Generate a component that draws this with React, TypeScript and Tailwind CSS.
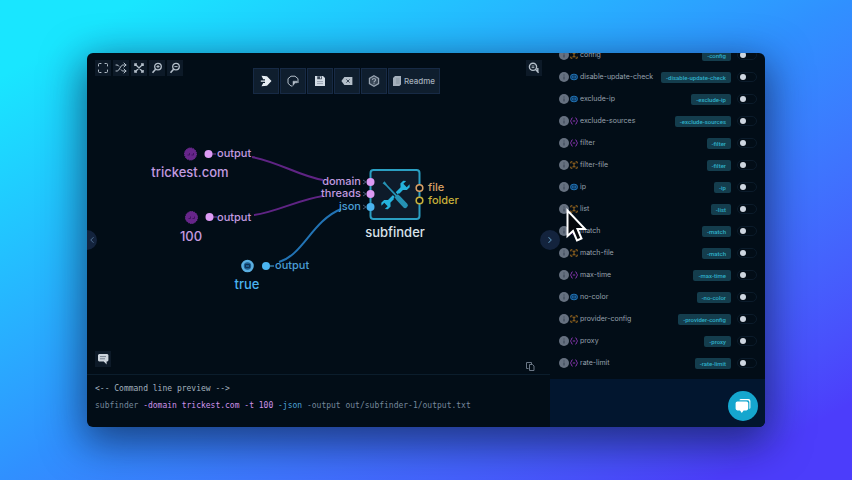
import React from "react";
import { Maximize, Shuffle, ChevronLeft, ChevronRight } from "lucide-react";

type Kind = "file" | "boolean" | "string";

const params: { name: string; flag: string; kind: Kind }[] = [
  { name: "config", flag: "-config", kind: "file" },
  { name: "disable-update-check", flag: "-disable-update-check", kind: "boolean" },
  { name: "exclude-ip", flag: "-exclude-ip", kind: "boolean" },
  { name: "exclude-sources", flag: "-exclude-sources", kind: "string" },
  { name: "filter", flag: "-filter", kind: "string" },
  { name: "filter-file", flag: "-filter", kind: "file" },
  { name: "ip", flag: "-ip", kind: "boolean" },
  { name: "list", flag: "-list", kind: "file" },
  { name: "match", flag: "-match", kind: "string" },
  { name: "match-file", flag: "-match", kind: "file" },
  { name: "max-time", flag: "-max-time", kind: "string" },
  { name: "no-color", flag: "-no-color", kind: "boolean" },
  { name: "provider-config", flag: "-provider-config", kind: "file" },
  { name: "proxy", flag: "-proxy", kind: "string" },
  { name: "rate-limit", flag: "-rate-limit", kind: "string" },
];

function KindIcon({ kind }: { kind: Kind }) {
  if (kind === "boolean") {
    return (
      <svg className="size-2 shrink-0" viewBox="0 0 8 8" fill="none" stroke="#2273b4">
        <rect x="0.6" y="1.3" width="6.8" height="5.4" rx="2.5" fill="#0d3a63" />
        <path d="M2.8 2.8v2.4M5.2 2.8v2.4" />
      </svg>
    );
  }
  if (kind === "file") {
    return (
      <svg className="size-2 shrink-0" viewBox="0 0 8 8" fill="none" stroke="#a06c20">
        <path d="M0.8 2.4V0.8h1.6M5.6 0.8h1.600v1.6M7.2 5.6v1.600H5.600M2.400 7.200H0.800V5.600" />
        <path d="M2.500 2.200h3M2.500 5.800h3M4 2.200v3.600" />
      </svg>
    );
  }
  return (
    <svg className="size-2 shrink-0" viewBox="0 0 8 8" fill="none" stroke="#8f38b8">
      <path d="M2.6 0.8C1 0.8 1.8 3.6 0.4 4c1.400 0.400 0.600 3.200 2.200 3.200M5.400 0.800C7 0.800 6.200 3.600 7.600 4c-1.400 0.400-0.600 3.200-2.200 3.200" />
      <path d="M2.8 4h2.4" />
    </svg>
  );
}

function ParamRow({ name, flag, kind }: { name: string; flag: string; kind: Kind }) {
  const id = `param-${name}`;
  return (
    <li className="flex h-[22px] shrink-0 items-center pr-2 pl-[9px]">
      <button
        type="button"
        aria-label={`About ${name}`}
        className="flex size-[10px] shrink-0 items-center justify-center rounded-full bg-[#667180]"
      >
        <svg className="size-2" viewBox="0 0 8 8" stroke="#3d4959" strokeWidth="1.2">
          <path d="M4 1.4v1.2M4 3.4v3" />
        </svg>
      </button>
      <span className="ml-px flex">
        <KindIcon kind={kind} />
      </span>
      <label htmlFor={id} className="ml-0.5 text-[7px] leading-[10px] text-[#98a2ae]">
        {name}
      </label>
      <span className="mr-[6px] ml-auto rounded-[2px] bg-[#143d4d] px-[5px] font-['Roboto','Liberation_Sans',sans-serif] text-[6px] leading-[11px] font-medium text-[#2fb0c9]">
        {flag}
      </span>
      <input
        id={id}
        type="checkbox"
        role="switch"
        className="flex h-[10px] w-5 shrink-0 appearance-none items-center rounded-full border border-[#0b1b2a] pl-0.5 before:size-[6px] before:rounded-full before:bg-[#ced6e0] before:content-['']"
      />
    </li>
  );
}

function IconButton({ label, children }: { label: string; children: React.ReactNode }) {
  return (
    <button
      type="button"
      aria-label={label}
      className="flex size-4 shrink-0 items-center justify-center bg-[#0d1a28] text-[#b4bfca]"
    >
      {children}
    </button>
  );
}

function ZoomIcon({ plus = false }: { plus?: boolean }) {
  return (
    <svg className="size-3" viewBox="0 0 12 12" fill="none" stroke="currentColor" strokeWidth="1.300">
      <circle cx="7" cy="4.600" r="3.300" />
      <path d="M4.600 7.200L1.500 10.800" strokeWidth="1.600" />
      <path d={plus ? "M5.400 4.600h3.200M7 3v3.200" : "M5.400 4.600h3.200"} strokeWidth="1" />
    </svg>
  );
}

function ToolButton({ label, children }: { label: string; children: React.ReactNode }) {
  return (
    <button
      type="button"
      aria-label={label}
      className="flex h-[26px] w-[26px] items-center justify-center border border-[#172a45] bg-[#0f1e2e] text-[#b4bfca]"
    >
      {children}
    </button>
  );
}

function Toolbar() {
  return (
    <div className="mt-2 ml-[70px] flex shrink-0 gap-px">
      <ToolButton label="Run">
        <svg className="size-3" viewBox="0 0 12 12" fill="#e6edf3">
          <path d="M1.500 0.800L7 1.200 11.500 6 7 10.800l-5.500 0.400 1.700-3.200H5V6.800H0.800V5.400H5V4.200H3.200z" />
        </svg>
      </ToolButton>
      <ToolButton label="Schedule">
        <svg className="size-3" viewBox="0 0 12 12" fill="none" stroke="currentColor">
          <path d="M5.500 11H4L1 8.300V3.700L4 1.200h4l3 2.500V8" />
          <path d="M6 10.500V6.200h4.200v1.600H8.200z" fill="currentColor" strokeWidth="0.500" />
        </svg>
      </ToolButton>
      <ToolButton label="Save">
        <svg className="size-3" viewBox="0 0 12 12">
          <path d="M1 1h8l2 2v8H1z" fill="#d3dce5" />
          <path d="M3.200 1.200h4.600v3H3.200z" fill="#3a4858" />
          <path d="M6 1.600h1v2H6z" fill="#d3dce5" />
          <path d="M3 6.600h6M3 8.600h6" stroke="#8a96a4" strokeWidth="0.800" />
        </svg>
      </ToolButton>
      <ToolButton label="Clear">
        <svg className="size-3" viewBox="0 0 12 12">
          <path d="M0.400 6l3-4h8v8h-8z" fill="currentColor" />
          <path d="M5.400 4.400l3.200 3.200M8.600 4.400L5.400 7.600" stroke="#3a4858" strokeWidth="1" />
        </svg>
      </ToolButton>
      <ToolButton label="Package">
        <svg className="size-3" viewBox="0 0 12 12" fill="none" stroke="#98a4b1" strokeWidth="1.200">
          <path d="M6 0.800l4.600 2.600v5.200L6 11.200 1.400 8.600V3.400z" fill="#384655" />
          <path d="M4.400 5c0-2 3.200-2 3.200 0C7.600 6.200 6 6 6 7.400M6 8.200v1" />
        </svg>
      </ToolButton>
      <button
        type="button"
        className="flex h-[26px] w-[52px] items-center justify-center gap-[3px] border border-[#172a45] bg-[#0f1e2e] text-[8px] leading-[10px] font-medium text-[#a4afbb]"
      >
        <svg className="h-[10px] w-2" viewBox="0 0 8 10">
          <path d="M2 0h6v8.400L6.400 10H0V2z" fill="#a4afbb" />
          <path d="M3 3h3.600M3 5h3.600M3 7h3.600" stroke="#7a8694" strokeWidth="0.700" />
        </svg>
        Readme
      </button>
    </div>
  );
}

const pink = "#dd9bf5";
const sky = "#4ab4f0";

const texts = [
  { text: "output", place: "left-[130px] top-[94px]", look: "text-[11px] text-[#c39be0]" },
  { text: "output", place: "left-[130px] top-[158px]", look: "text-[11px] text-[#c39be0]" },
  { text: "output", place: "left-[188px] top-[206px]", look: "text-[11px] text-[#4a9ed6]" },
  { text: "domain", place: "right-[189px] top-[122px]", look: "text-[11px] text-[#c39be0]" },
  { text: "threads", place: "right-[189px] top-[134px]", look: "text-[11px] text-[#c39be0]" },
  { text: "json", place: "right-[189px] top-[147px]", look: "text-[11px] text-[#4a9ed6]" },
  { text: "file", place: "left-[341px] top-[128px]", look: "text-[11px] text-[#d9a066]" },
  { text: "folder", place: "left-[341px] top-[141px]", look: "text-[11px] text-[#c8b03a]" },
  { text: "trickest.com", place: "left-[103px] top-[113px] -translate-x-1/2", look: "text-[13px] text-[#c39be0]" },
  { text: "100", place: "left-[104px] top-[177px] -translate-x-1/2", look: "text-[13px] text-[#c39be0]" },
  { text: "true", place: "left-[160px] top-[225px] -translate-x-1/2", look: "text-[13px] text-[#4ab4f0]" },
  { text: "subfinder", place: "left-[308px] top-[173px] -translate-x-1/2", look: "text-[13px] text-[#d9e2ea]" },
];

function Graph() {
  return (
    <div className="absolute top-0 left-0 h-full w-[463px]">
      <svg className="absolute inset-0 h-full w-full" fill="none">
        <path d="M165 104C192 109 212 123 236 127" stroke="#5f2484" strokeWidth="2" />
        <path d="M167 162C190 159 210 147 236 143" stroke="#5f2484" strokeWidth="2" />
        <path d="M192 209C216 202 225 168 254 156" stroke="#2273b4" strokeWidth="2" />
        <path d="M125 101h4M126 164h4" stroke="#7d3f9e" />
        <path d="M183 213h4" stroke={sky} />
        {[
          [103.5, 101],
          [104.5, 164.5],
        ].map(([x, y]) => (
          <g key={y}>
            <circle cx={x} cy={y} r="6" fill="#67258a" stroke="#732f98" strokeDasharray="1.500 0.800" />
            <path d={`M${x - 3} ${y + 1}h2v-2M${x + 1} ${y + 1}h2v-2`} stroke="#3f1460" />
          </g>
        ))}
        <circle cx="160.500" cy="213" r="5" fill="#1c5c8e" stroke="#5aaee0" strokeWidth="2.600" />
        <path d="M158.500 211.500h4v3h-4z" stroke="#0e3154" />
        <circle cx="121.500" cy="101" r="4" fill={pink} />
        <circle cx="122.500" cy="164" r="4" fill={pink} />
        <circle cx="179" cy="213" r="4" fill={sky} />
        <rect x="283.500" y="117" width="49" height="49" rx="3" fill="#0e1b2a" stroke="#2b9fc2" strokeWidth="2" />
        <path d="M276 127l3 2-3 2M276 139l3 2-3 2M276 152l3 2-3 2" stroke="#4b5d78" />
        <circle cx="283.500" cy="129" r="4" fill={pink} />
        <circle cx="283.500" cy="141" r="4" fill={pink} />
        <circle cx="283.500" cy="154" r="4" fill={sky} />
        <circle cx="332.500" cy="135" r="3.300" fill="#020c16" stroke="#d9a066" strokeWidth="1.600" />
        <circle cx="332.500" cy="147.500" r="3.300" fill="#020c16" stroke="#c8b03a" strokeWidth="1.600" />
        <g transform="translate(308.500 142)">
          <g transform="rotate(45)" fill="#25b2dc">
            <path d="M-1.800-10.500V10.500H1.800V-10.500z" />
            <path d="M-1.800-9L-4.600-11.500V-15.500L-2.400-17.500V-13.500H2.400V-17.500L4.600-15.500V-11.500L1.800-9z" />
            <path d="M-1.800 9L-4.600 11.500V15.500L-2.400 17.500V13.500H2.400V17.500L4.600 15.500V11.500L1.800 9z" />
          </g>
          <g transform="rotate(-43)">
            <path d="M-2-17.500H2V1H3.800V17.500H-3.800V1H-2z" fill="#0e1b2a" />
            <path d="M-1.400-17.500H1.400L0.900-13V1H2.200L2.600 4V14.500Q2.600 16.800 0 16.800T-2.600 14.500V4L-2.200 1H-0.900V-13z" fill="#2592b4" />
          </g>
        </g>
      </svg>
      {texts.map((t) => (
        <span
          key={t.place}
          className={`absolute leading-[12px] font-medium whitespace-nowrap ${t.place} ${t.look}`}
        >
          {t.text}
        </span>
      ))}
    </div>
  );
}

export default function App() {
  return (
    <div className="flex h-screen bg-linear-to-br from-[#19e6ff] from-8% via-[#3090ff] to-[#4c3dfb] to-92% px-[87px] py-[53px] font-['Inter','Liberation_Sans',sans-serif]">
      <main className="flex min-w-0 flex-1 overflow-hidden rounded-[6px] bg-[#020d17] shadow-[0_12px_40px_4px_rgba(8,16,50,0.6)]">
        <div className="relative flex min-w-0 flex-1 flex-col">
          <section aria-label="Workflow" className="relative flex flex-1 flex-col">
            <Graph />
            <div className="relative flex items-start px-2 pt-[7px]">
              <div className="flex gap-0.5">
                <IconButton label="Fullscreen">
                  <Maximize className="size-3" strokeWidth={2} />
                </IconButton>
                <IconButton label="Rearrange">
                  <Shuffle className="size-3" strokeWidth={2} />
                </IconButton>
                <IconButton label="Fit to screen">
                  <svg className="size-[10px]" viewBox="0 0 10 10" fill="none" stroke="currentColor" strokeWidth="1.200">
                    <path d="M0.800 3V0.800H3M7 0.800h2.200V3M9.200 7v2.200H7M3 9.200H0.800V7M1 1l8 8M9 1L1 9" />
                  </svg>
                </IconButton>
                <IconButton label="Zoom in">
                  <ZoomIcon plus />
                </IconButton>
                <IconButton label="Zoom out">
                  <ZoomIcon />
                </IconButton>
              </div>
              <Toolbar />
              <div className="ml-auto">
                <IconButton label="Search nodes">
                  <svg className="size-3" viewBox="0 0 12 12" fill="none" stroke="currentColor" strokeWidth="1.400">
                    <circle cx="5" cy="4.800" r="3.600" />
                    <path d="M3.600 4h2.800M3.600 5.600h2.800" strokeWidth="0.900" />
                    <path d="M7.400 7.200l3.200 3.600M9.800 6v4" />
                  </svg>
                </IconButton>
              </div>
            </div>
            <div className="relative mt-auto flex h-[23px] items-start justify-between px-2 pb-[3px]">
              <IconButton label="Comments">
                <svg className="size-3" viewBox="0 0 12 12">
                  <path d="M2 1h8.400l1 1v5.400l-1 1H9.600v3L6.800 8.400H2l-1-1V2z" fill="#ccd4dc" />
                  <path d="M3 3.600h6M3 5.800h5" stroke="#6a7685" strokeWidth="0.900" />
                </svg>
              </IconButton>
              <button type="button" aria-label="Copy command" className="mr-[7px] self-end text-[#6a7685]">
                <svg className="size-[9px]" viewBox="0 0 9 9" fill="none" stroke="currentColor">
                  <path d="M2.500 6.500H0.500v-6h5v1.500" />
                  <path d="M3.500 2.500h3l1.500 1.500v4.500H3.500z" />
                </svg>
              </button>
            </div>
          </section>

          <section
            aria-label="Command line preview"
            className="h-[53px] shrink-0 border-t border-[#0b1d2c] px-2 pt-[5px] font-['DejaVu_Sans_Mono','Liberation_Mono',monospace] text-[8px] leading-[17px] whitespace-nowrap text-[#75879b]"
          >
            <p className="text-[#a3b1bf]">&lt;-- Command line preview --&gt;</p>
            <p>
              subfinder <span className="text-[#cf92ea]">-domain trickest.com -t 100</span>{" "}
              <span className="text-[#4ba3d8]">-json</span> -output out/subfinder-1/output.txt
            </p>
          </section>

          <button
            type="button"
            aria-label="Show node library"
            className="absolute top-1/2 -left-[10px] flex size-5 -translate-y-1/2 items-center justify-end rounded-full bg-[#13233d] text-[#5c7ca0]"
          >
            <ChevronLeft className="size-[10px]" strokeWidth={2} />
          </button>
          <button
            type="button"
            aria-label="Hide parameters"
            className="absolute top-1/2 -right-[10px] z-10 flex size-5 -translate-y-1/2 items-center justify-center rounded-full bg-[#13233d] text-[#5d93b8]"
          >
            <ChevronRight className="size-[10px]" strokeWidth={2.5} />
          </button>
        </div>

        <aside className="relative flex w-[215px] shrink-0 flex-col">
          <ul className="flex min-h-0 flex-1 flex-col justify-end overflow-hidden pb-[5px]">
            {params.map((p) => (
              <ParamRow key={p.name} {...p} />
            ))}
          </ul>
          <div className="h-12 shrink-0 bg-[#02162f]" />
          <button
            type="button"
            aria-label="Open chat"
            className="absolute right-[7px] bottom-[6px] flex size-[30px] items-center justify-center rounded-full bg-[#15a6ce]"
          >
            <svg className="size-4" viewBox="0 0 16 16" fill="#fff">
              <path d="M4.400 2.200Q4.600 1 6 1h7.400Q15.400 1 15.400 3v6.400q0 1.400-1 1.600V4.200q0-2-1.800-2z" />
              <path d="M2.400 3.400h9q1.800 0 1.800 1.800v5.400q0 1.800-1.800 1.800H8.600L6.800 15 5 12.400H2.400Q0.600 12.400 0.600 10.600V5.200Q0.600 3.400 2.400 3.400z" />
            </svg>
          </button>
          <svg
            className="pointer-events-none absolute top-[155px] left-4 h-[34px] w-[22px]"
            viewBox="0 0 22 34"
            fill="#05080c"
            stroke="#fff"
            strokeWidth="2"
          >
            <path d="M1.500 2.500v25.500l5.500-5 4 9.500 4.500-2-4-9.500h7.500z" />
          </svg>
        </aside>
      </main>
    </div>
  );
}
